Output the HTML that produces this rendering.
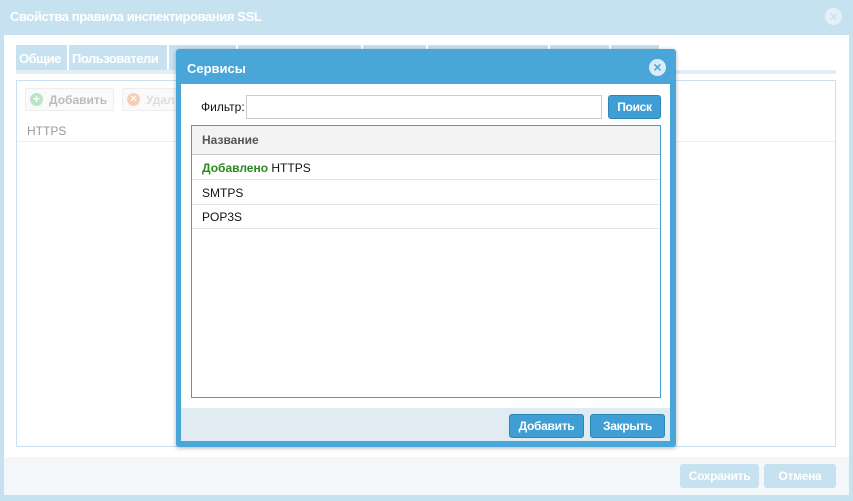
<!DOCTYPE html>
<html><head><meta charset="utf-8"><style>
*{box-sizing:border-box;margin:0;padding:0}
body{width:853px;height:501px;overflow:hidden;background:#c6e2f1;font-family:"Liberation Sans",sans-serif;font-size:12px;position:relative}
.a{position:absolute}
.t{position:absolute;top:45px;height:25px;background:#c6e2f1;color:#fff;font-weight:bold;font-size:13px;line-height:27px;padding-left:3px;letter-spacing:-0.5px}
.btn{position:absolute;border-radius:3px;color:#fff;font-weight:bold;font-size:12px;text-align:center;letter-spacing:-0.3px}
.row{position:absolute;left:0;right:0;height:24px;border-bottom:1px solid #e6e6e6;padding-left:10px;line-height:24px;font-size:12px;color:#111}
</style></head><body>
<div class="a" style="left:10px;top:9px;color:#fff;font-weight:bold;font-size:13px;letter-spacing:-0.4px">Свойства правила инспектирования SSL</div>
<div class="a" style="left:825px;top:8px;width:17px;height:17px;border-radius:50%;background:#e3f0f8;color:#c6e2f1;font-size:13px;line-height:17px;text-align:center;font-weight:bold">×</div>
<div class="a" style="left:4px;top:35px;width:845px;height:460px;background:#fff"></div>
<div class="t" style="left:16px;width:51px">Общие</div>
<div class="t" style="left:69px;width:98px">Пользователи</div>
<div class="t" style="left:169px;width:67px"></div>
<div class="t" style="left:238px;width:123px"></div>
<div class="t" style="left:363px;width:63px"></div>
<div class="t" style="left:428px;width:120px"></div>
<div class="t" style="left:550px;width:59px"></div>
<div class="t" style="left:611px;width:48px"></div>
<div class="a" style="left:16px;top:70px;width:820px;height:4px;background:#e0eef6"></div>
<div class="a" style="left:16px;top:80px;width:820px;height:367px;border:1px solid #c6e2f1"></div>
<div class="a" style="left:25px;top:88px;width:89px;height:23px;border:1px solid #eee;border-radius:2px;background:#fafafa"></div>
<div class="a" style="left:30px;top:93px;width:13px;height:13px;border-radius:50%;background:#b8e6c4;color:#fff;font-size:12px;line-height:13px;text-align:center;font-weight:bold">+</div>
<div class="a" style="left:49px;top:93px;color:#bbb;font-weight:bold">Добавить</div>
<div class="a" style="left:122px;top:88px;width:60px;height:23px;border:1px solid #eee;border-radius:2px;background:#fafafa"></div>
<div class="a" style="left:127px;top:93px;width:13px;height:13px;border-radius:50%;background:#f8cdb8;color:#fff;font-size:11px;line-height:13px;text-align:center;font-weight:bold">×</div>
<div class="a" style="left:146px;top:93px;color:#ddd;font-weight:bold">Удал</div>
<div class="a" style="left:27px;top:124px;color:#999">HTTPS</div>
<div class="a" style="left:17px;top:141px;width:818px;height:1px;background:#eee"></div>
<div class="a" style="left:4px;top:457px;width:845px;height:38px;background:#f3f7fa"></div>
<div class="btn" style="left:680px;top:464px;width:79px;height:24px;background:#c6e2f1;line-height:24px">Сохранить</div>
<div class="btn" style="left:764px;top:464px;width:72px;height:24px;background:#c6e2f1;line-height:24px">Отмена</div>

<div class="a" style="left:176px;top:49px;width:500px;height:398px;background:#4aa6d8;border-radius:3px;box-shadow:0 1px 4px rgba(0,0,0,.3)"></div>
<div class="a" style="left:187px;top:61px;color:#fff;font-weight:bold;font-size:13px">Сервисы</div>
<div class="a" style="left:649px;top:59px;width:17px;height:17px;border-radius:50%;background:#d9ecf7;color:#4aa6d8;font-size:14px;line-height:17px;text-align:center;font-weight:bold">×</div>
<div class="a" style="left:181px;top:84px;width:489px;height:357px;background:#fff"></div>
<div class="a" style="left:181px;top:408px;width:489px;height:33px;background:#e1ecf2"></div>
<div class="a" style="left:201px;top:100px;color:#111">Фильтр:</div>
<div class="a" style="left:246px;top:95px;width:356px;height:24px;border:1px solid #ccc"></div>
<div class="btn" style="left:608px;top:95px;width:53px;height:24px;background:#3f9fd4;border:1px solid #2f85b6;line-height:22px">Поиск</div>
<div class="a" style="left:191px;top:125px;width:470px;height:273px;border:1px solid #3f9fd4;overflow:hidden">
<div style="position:absolute;left:0;right:0;top:0;height:29px;background:#f3f3f3;border-bottom:1px solid #c8c8c8;color:#555;font-weight:bold;line-height:29px;padding-left:10px">Название</div>
<div class="row" style="top:30px"><b style="color:#2a8a1f">Добавлено</b> HTTPS</div>
<div class="row" style="top:55px">SMTPS</div>
<div class="row" style="top:79px">POP3S</div>
</div>
<div class="btn" style="left:509px;top:414px;width:75px;height:24px;background:#3f9fd4;border:1px solid #2f85b6;line-height:22px">Добавить</div>
<div class="btn" style="left:590px;top:414px;width:75px;height:24px;background:#3f9fd4;border:1px solid #2f85b6;line-height:22px">Закрыть</div>
</body></html>
